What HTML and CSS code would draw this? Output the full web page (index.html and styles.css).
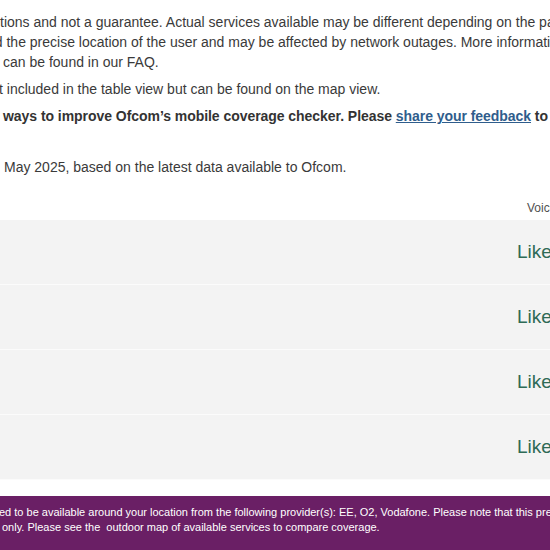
FILE: index.html
```
<!DOCTYPE html>
<html lang="en">
<head>
<meta charset="utf-8">
<title>Mobile coverage</title>
<link rel="stylesheet" href="styles.css">
</head>
<body>
<main class="page">
  <section class="intro">
    <p class="para">
      <span class="line">tions and not a guarantee. Actual services available may be different depending on the particular handset used</span>
      <span class="line l2">nd the precise location of the user and may be affected by network outages. More information about our predictions</span>
      <span class="line l3">can be found in our FAQ.</span>
    </p>
    <p class="para">
      <span class="line l4">t included in the table view but can be found on the map view.</span>
    </p>
    <p class="para strong">
      <span class="line l5">ways to improve Ofcom’s mobile coverage checker. Please <a class="link" href="#">share your feedback</a> to help us.</span>
    </p>
    <p class="para updated">
      <span class="line l6">May 2025, based on the latest data available to Ofcom.</span>
    </p>
  </section>

  <section class="table">
    <div class="thead">
      <div class="th-spacer"></div>
      <div class="th">Voice</div>
    </div>
    <div class="row"><div class="cell-name"></div><div class="cell-val">Likely</div></div>
    <div class="row"><div class="cell-name"></div><div class="cell-val">Likely</div></div>
    <div class="row"><div class="cell-name"></div><div class="cell-val">Likely</div></div>
    <div class="row"><div class="cell-name"></div><div class="cell-val">Likely</div></div>
  </section>

  <footer class="banner">
    <span class="bline b1">ed to be available around your location from the following provider(s): EE, O2, Vodafone. Please note that this prediction is for outdoor use</span>
    <span class="bline b2">only. Please see the &nbsp;outdoor map of available services to compare coverage.</span>
  </footer>
</main>
</body>
</html>
```
FILE: styles.css
```
html, body {
  margin: 0;
  padding: 0;
  overflow: hidden;
  background: #ffffff;
}

.page {
  width: 550px;
  height: 550px;
  overflow: hidden;
  font-family: "Liberation Sans", Arial, sans-serif;
  font-size: 14px;
  line-height: 20px;
  color: #3a3a3a;
}

.intro {
  padding-top: 12px;
}

.para {
  margin: 0 0 7px 0;
}

.line {
  display: block;
  white-space: nowrap;
}

.l2 { margin-left: -13px; }
.l3 { margin-left: 3px; }
.l4 { margin-left: -1px; }
.l5 { margin-left: 3px; }
.l6 { margin-left: 4px; }

.strong {
  font-weight: bold;
  color: #333333;
  margin-bottom: 31px;
  letter-spacing: -0.05px;
}

.link {
  color: #2f5d8c;
  text-decoration: underline;
}

.updated {
  margin-bottom: 0;
}

.table {
  margin-top: 19px;
}

.thead {
  display: grid;
  grid-template-columns: 527px 1fr;
  height: 24px;
  align-items: center;
}

.th {
  font-size: 12px;
  color: #505050;
  white-space: nowrap;
}

.row {
  display: grid;
  grid-template-columns: 517px 1fr;
  align-items: center;
  height: 64px;
  background: #f3f3f3;
  border-bottom: 1px solid #fbfbfb;
}

.cell-val {
  font-size: 19px;
  color: #2e6a56;
  white-space: nowrap;
}

.banner {
  margin-top: 16px;
  background: #6a1f65;
  color: #ffffff;
  font-size: 11px;
  line-height: 15px;
  padding-top: 9px;
  height: 60px;
}

.bline {
  display: block;
  white-space: nowrap;
}

.b1 { margin-left: -1px; }
.b2 { margin-left: 2px; }
```
